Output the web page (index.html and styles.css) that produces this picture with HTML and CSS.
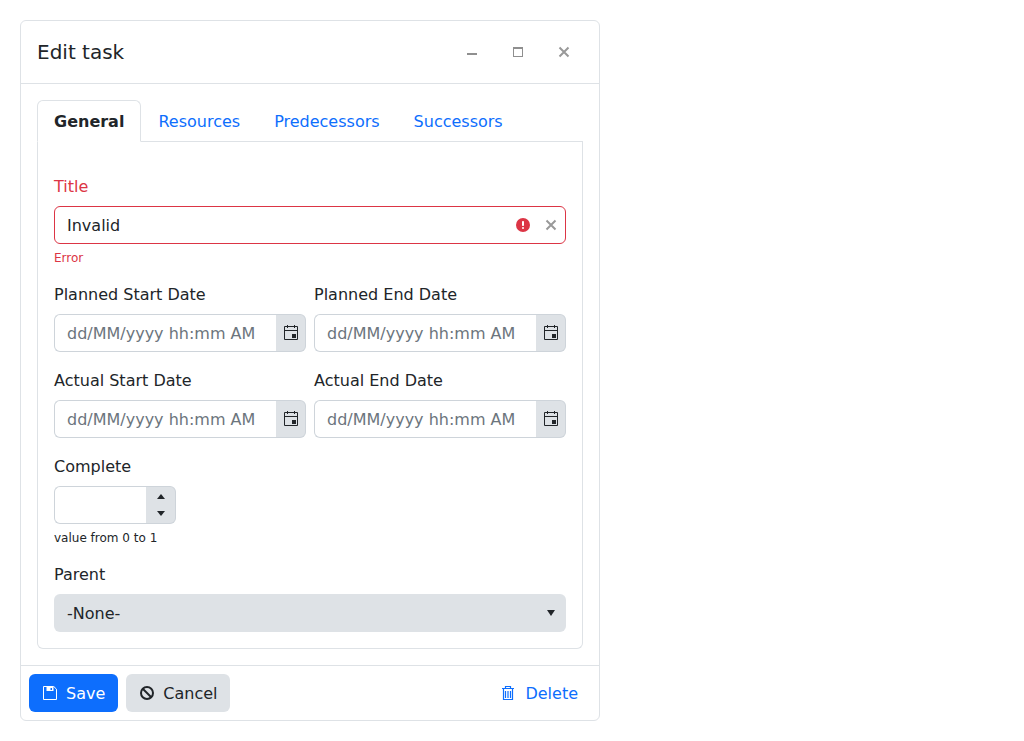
FILE: index.html
```html
<!DOCTYPE html>
<html lang="en">
  <head>
    <meta charset="UTF-8" />
    <title>Edit task</title>
    <link rel="stylesheet" href="styles.css">
  </head>

  <body>
    <div class="window">
      <div class="window-header">
        <h1 class="window-title">Edit task</h1>
        <button class="window-btn" type="button" aria-label="Minimize">
          <svg width="12" height="12" viewBox="0 0 12 12"><rect x="1" y="7" width="10" height="2" fill="#8f8f8f" /></svg>
        </button>
        <button class="window-btn" type="button" aria-label="Maximize">
          <svg width="12" height="12" viewBox="0 0 12 12"><rect x="1.500" y="1.500" width="9" height="9" fill="none" stroke="#8f8f8f" /><rect x="1" y="1" width="10" height="2" fill="#8f8f8f" /></svg>
        </button>
        <button class="window-btn" type="button" aria-label="Close">
          <svg width="12" height="12" viewBox="0 0 12 12"><path d="M1.500 1.500l9 9M10.500 1.500l-9 9" stroke="#999" stroke-width="2" /></svg>
        </button>
      </div>

      <div class="window-body">
        <ul class="tabs">
          <li><a class="tab active">General</a></li>
          <li><a class="tab">Resources</a></li>
          <li><a class="tab">Predecessors</a></li>
          <li><a class="tab">Successors</a></li>
        </ul>

        <form class="tab-pane">
          <div class="field">
            <label class="label label-error" for="title">Title</label>
            <div class="input-wrap">
              <input class="input input-error" id="title" value="Invalid" />
              <span class="input-icons">
                <svg width="14" height="14" viewBox="0 0 14 14"><circle cx="7" cy="7" r="7" fill="#dc3545" /><rect x="6" y="3" width="2" height="5" rx="0.8" fill="#fff" /><rect x="6" y="9" width="2" height="2" rx="1" fill="#fff" /></svg>
                <svg width="12" height="12" viewBox="0 0 12 12"><path d="M1.500 1.500l9 9M10.500 1.500l-9 9" stroke="#999" stroke-width="2" /></svg>
              </span>
            </div>
            <div class="error-text">Error</div>
          </div>

          <div class="date-row">
            <div class="field">
              <label class="label">Planned Start Date</label>
              <div class="input-group">
                <input class="input" placeholder="dd/MM/yyyy hh:mm AM" />
                <span class="addon">
                  <svg width="14" height="16" viewBox="0 0 14 16"><path d="M.5 1.500h13v13H.5z M.5 5.500h13 M3.500 0v3 M10.500 0v3" fill="none" stroke="#212529" /><rect x="8" y="9" width="4" height="4" fill="#212529" /></svg>
                </span>
              </div>
            </div>
            <div class="field">
              <label class="label">Planned End Date</label>
              <div class="input-group">
                <input class="input" placeholder="dd/MM/yyyy hh:mm AM" />
                <span class="addon">
                  <svg width="14" height="16" viewBox="0 0 14 16"><path d="M.5 1.500h13v13H.5z M.5 5.500h13 M3.500 0v3 M10.500 0v3" fill="none" stroke="#212529" /><rect x="8" y="9" width="4" height="4" fill="#212529" /></svg>
                </span>
              </div>
            </div>
          </div>

          <div class="date-row">
            <div class="field">
              <label class="label">Actual Start Date</label>
              <div class="input-group">
                <input class="input" placeholder="dd/MM/yyyy hh:mm AM" />
                <span class="addon">
                  <svg width="14" height="16" viewBox="0 0 14 16"><path d="M.5 1.500h13v13H.5z M.5 5.500h13 M3.500 0v3 M10.500 0v3" fill="none" stroke="#212529" /><rect x="8" y="9" width="4" height="4" fill="#212529" /></svg>
                </span>
              </div>
            </div>
            <div class="field">
              <label class="label">Actual End Date</label>
              <div class="input-group">
                <input class="input" placeholder="dd/MM/yyyy hh:mm AM" />
                <span class="addon">
                  <svg width="14" height="16" viewBox="0 0 14 16"><path d="M.5 1.500h13v13H.5z M.5 5.500h13 M3.500 0v3 M10.500 0v3" fill="none" stroke="#212529" /><rect x="8" y="9" width="4" height="4" fill="#212529" /></svg>
                </span>
              </div>
            </div>
          </div>

          <div class="field">
            <label class="label">Complete</label>
            <div class="input-group number-group">
              <input class="input" />
              <span class="addon addon-spin">
                <svg width="8" height="5" viewBox="0 0 8 5"><path d="M4 0l4 5H0z" fill="#212529" /></svg>
                <svg width="8" height="5" viewBox="0 0 8 5"><path d="M0 0h8L4 5z" fill="#212529" /></svg>
              </span>
            </div>
            <div class="help-text">value from 0 to 1</div>
          </div>

          <div class="field">
            <label class="label">Parent</label>
            <div class="select">
              <span>-None-</span>
              <svg width="8" height="6" viewBox="0 0 8 6"><path d="M0 0h8L4 6z" fill="#212529" /></svg>
            </div>
          </div>
        </form>
      </div>

      <div class="window-footer">
        <button class="btn btn-primary" type="button">
          <svg width="14" height="14" viewBox="0 0 14 14"><path d="M.5.500h10.300l2.700 2.700v10.300H.5z" fill="none" stroke="#fff" /><path d="M3.500 1h7v4h-7z M7.500 2v2h1.500V2z" fill="#fff" fill-rule="evenodd" /></svg>
          <span>Save</span>
        </button>
        <button class="btn btn-secondary" type="button">
          <svg width="14" height="14" viewBox="0 0 14 14"><circle cx="7" cy="7" r="6" fill="none" stroke="#212529" stroke-width="2" /><path d="M3 3l8 8" stroke="#212529" stroke-width="2" /></svg>
          <span>Cancel</span>
        </button>
        <button class="btn btn-link" type="button">
          <svg width="12" height="14" viewBox="0 0 12 14"><path d="M3.500 2V.5h5V2 M0 2.500h12 M1.500 3v10.500h9V3 M3.500 5v7 M6 5v7 M8.500 5v7" fill="none" stroke="#0d6efd" stroke-width="1.200" /></svg>
          <span>Delete</span>
        </button>
      </div>
    </div>
  </body>
</html>
```

FILE: styles.css
```css
* {
  box-sizing: border-box;
}
body {
  margin: 0;
  padding: 20px;
  background: #fff;
  color: #212529;
  font-family: "DejaVu Sans", sans-serif;
  font-size: 16px;
  line-height: 1.5;
}
.window {
  width: 580px;
  border: 1px solid #dee2e6;
  border-radius: 6px;
  background: #fff;
}
.window-header {
  display: flex;
  align-items: center;
  gap: 8px;
  height: 63px;
  padding: 12px 16px;
  border-bottom: 1px solid #dee2e6;
}
.window-title {
  flex: 1;
  margin: 0;
  font-size: 20px;
  font-weight: 400;
  line-height: 1.5;
}
.window-btn {
  display: flex;
  align-items: center;
  justify-content: center;
  width: 38px;
  height: 38px;
  padding: 0;
  border: none;
  background: none;
}
.window-body {
  padding: 16px;
}
.tabs {
  display: flex;
  margin: 0;
  padding: 0;
  list-style: none;
  border-bottom: 1px solid #dee2e6;
}
.tab {
  display: block;
  margin-bottom: -1px;
  padding: 9px 16px 7px;
  border: 1px solid transparent;
  border-radius: 6px 6px 0 0;
  color: #0d6efd;
}
.tab.active {
  border-color: #dee2e6 #dee2e6 #fff;
  background: #fff;
  color: #212529;
  font-weight: 700;
}
.tab-pane {
  display: flex;
  flex-direction: column;
  gap: 16px;
  padding: 32px 16px 16px;
  border: 1px solid #dee2e6;
  border-top: none;
  border-radius: 0 0 6px 6px;
}
.label {
  display: block;
  margin-bottom: 7px;
  padding-top: 1px;
}
.label-error {
  color: #dc3545;
}
.input {
  display: block;
  width: 100%;
  min-width: 0;
  height: 38px;
  padding: 6px 12px;
  border: 1px solid #ced4da;
  border-radius: 6px;
  background: #fff;
  color: #212529;
  font: inherit;
  outline: none;
}
.input::placeholder {
  color: #6c757d;
  opacity: 1;
}
.input-error {
  border-color: #dc3545;
}
.input-wrap {
  position: relative;
}
.input-icons {
  position: absolute;
  top: 0;
  right: 9px;
  bottom: 0;
  display: flex;
  align-items: center;
  gap: 15px;
}
.input-icons svg {
  display: block;
}
.error-text,
.help-text {
  margin-top: 6px;
  font-size: 12px;
  line-height: 16px;
}
.error-text {
  color: #dc3545;
}
.date-row {
  display: grid;
  grid-template-columns: 1fr 1fr;
  gap: 8px;
}
.input-group {
  display: flex;
}
.input-group .input {
  flex: 1;
  border-right: none;
  border-radius: 6px 0 0 6px;
}
.addon {
  display: flex;
  align-items: center;
  justify-content: center;
  flex: none;
  width: 30px;
  height: 38px;
  padding-left: 1px;
  border: 1px solid #ced4da;
  border-left: none;
  border-radius: 0 6px 6px 0;
  background: #dee2e6;
}
.number-group {
  width: 122px;
}
.addon-spin {
  flex-direction: column;
  gap: 12px;
}
.select {
  display: flex;
  align-items: center;
  justify-content: space-between;
  height: 38px;
  padding: 0 11px 0 13px;
  border-radius: 6px;
  background: #dee2e6;
}
.select span,
.btn span {
  padding-top: 2px;
}
.window-footer {
  display: flex;
  gap: 8px;
  padding: 8px;
  border-top: 1px solid #dee2e6;
}
.btn {
  display: flex;
  align-items: center;
  gap: 9px;
  height: 38px;
  padding: 0 13px 0 14px;
  border: none;
  border-radius: 6px;
  font: inherit;
}
.btn-primary {
  background: #0d6efd;
  color: #fff;
}
.btn-secondary {
  background: #dee2e6;
  color: #212529;
}
.btn-link {
  gap: 11px;
  margin-left: auto;
  background: none;
  color: #0d6efd;
}
```
